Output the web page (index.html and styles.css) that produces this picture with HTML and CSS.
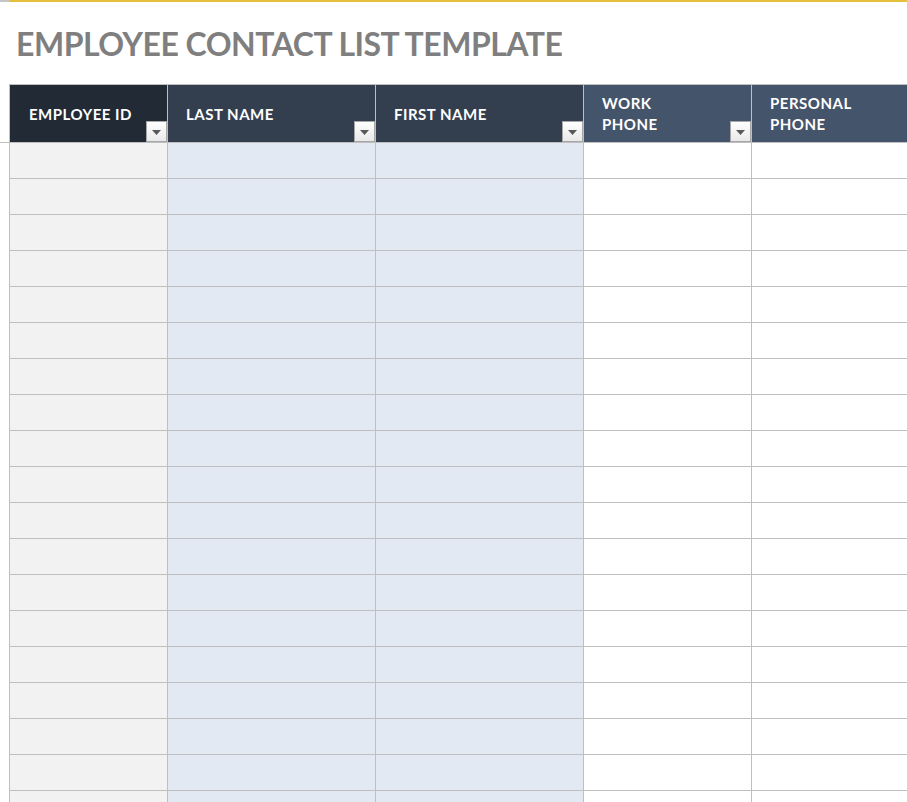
FILE: index.html
```html
<!DOCTYPE html>
<html lang="en">
<head>
<meta charset="utf-8">
<title>Employee Contact List Template</title>
<link rel="stylesheet" href="styles.css">
</head>
<body>
<div class="topbar"><span class="topbar-corner"></span><span class="topbar-line"></span></div>
<h1 class="title">EMPLOYEE CONTACT LIST TEMPLATE</h1>
<div class="sheet-wrap">
  <div class="gutter"><div class="gutter-head"></div></div>
  <div class="sheet">
    <div class="hcell h1"><span class="htext">EMPLOYEE ID</span><span class="filter"><svg width="9" height="5" viewBox="0 0 9 5"><path d="M0 0h9L4.5 5z" fill="#595959"/></svg></span></div>
    <div class="hcell h2"><span class="htext">LAST NAME</span><span class="filter"><svg width="9" height="5" viewBox="0 0 9 5"><path d="M0 0h9L4.5 5z" fill="#595959"/></svg></span></div>
    <div class="hcell h2"><span class="htext">FIRST NAME</span><span class="filter"><svg width="9" height="5" viewBox="0 0 9 5"><path d="M0 0h9L4.5 5z" fill="#595959"/></svg></span></div>
    <div class="hcell h3"><span class="htext">WORK<br>PHONE</span><span class="filter"><svg width="9" height="5" viewBox="0 0 9 5"><path d="M0 0h9L4.5 5z" fill="#595959"/></svg></span></div>
    <div class="hcell h3"><span class="htext">PERSONAL<br>PHONE</span></div>

    <div class="c c1"></div><div class="c c2"></div><div class="c c2"></div><div class="c c3"></div><div class="c c3"></div>
    <div class="c c1"></div><div class="c c2"></div><div class="c c2"></div><div class="c c3"></div><div class="c c3"></div>
    <div class="c c1"></div><div class="c c2"></div><div class="c c2"></div><div class="c c3"></div><div class="c c3"></div>
    <div class="c c1"></div><div class="c c2"></div><div class="c c2"></div><div class="c c3"></div><div class="c c3"></div>
    <div class="c c1"></div><div class="c c2"></div><div class="c c2"></div><div class="c c3"></div><div class="c c3"></div>
    <div class="c c1"></div><div class="c c2"></div><div class="c c2"></div><div class="c c3"></div><div class="c c3"></div>
    <div class="c c1"></div><div class="c c2"></div><div class="c c2"></div><div class="c c3"></div><div class="c c3"></div>
    <div class="c c1"></div><div class="c c2"></div><div class="c c2"></div><div class="c c3"></div><div class="c c3"></div>
    <div class="c c1"></div><div class="c c2"></div><div class="c c2"></div><div class="c c3"></div><div class="c c3"></div>
    <div class="c c1"></div><div class="c c2"></div><div class="c c2"></div><div class="c c3"></div><div class="c c3"></div>
    <div class="c c1"></div><div class="c c2"></div><div class="c c2"></div><div class="c c3"></div><div class="c c3"></div>
    <div class="c c1"></div><div class="c c2"></div><div class="c c2"></div><div class="c c3"></div><div class="c c3"></div>
    <div class="c c1"></div><div class="c c2"></div><div class="c c2"></div><div class="c c3"></div><div class="c c3"></div>
    <div class="c c1"></div><div class="c c2"></div><div class="c c2"></div><div class="c c3"></div><div class="c c3"></div>
    <div class="c c1"></div><div class="c c2"></div><div class="c c2"></div><div class="c c3"></div><div class="c c3"></div>
    <div class="c c1"></div><div class="c c2"></div><div class="c c2"></div><div class="c c3"></div><div class="c c3"></div>
    <div class="c c1"></div><div class="c c2"></div><div class="c c2"></div><div class="c c3"></div><div class="c c3"></div>
    <div class="c c1"></div><div class="c c2"></div><div class="c c2"></div><div class="c c3"></div><div class="c c3"></div>
    <div class="c c1"></div><div class="c c2"></div><div class="c c2"></div><div class="c c3"></div><div class="c c3"></div>
  </div>
</div>
</body>
</html>
```
FILE: styles.css
```css
html, body {
  margin: 0;
  padding: 0;
  background: #ffffff;
  overflow: hidden;
  font-family: Lato, "Liberation Sans", sans-serif;
}
body {
  width: 907px;
  height: 802px;
}
.topbar {
  display: flex;
  height: 2px;
}
.topbar-corner {
  width: 9px;
  background: #c6c6c6;
}
.topbar-line {
  flex: 1;
  background: #e6bf3c;
}
.title {
  margin: 0;
  padding: 22px 0 20px 16px;
  height: 40px;
  line-height: 40px;
  font-size: 32px;
  font-weight: 700;
  letter-spacing: -0.5px;
  color: #7f7f7f;
  white-space: nowrap;
}
.sheet-wrap {
  display: flex;
  align-items: flex-start;
}
.gutter {
  width: 9px;
  flex: none;
}
.gutter-head {
  margin-top: 1px;
  height: 57px;
  border-bottom: 1px solid #bfbfbf;
}
.sheet {
  flex: none;
  display: grid;
  grid-template-columns: 157px 207px 207px 167px 200px;
  grid-template-rows: 57px;
  grid-auto-rows: 35px;
  gap: 1px;
  padding: 1px 0 0 1px;
  background: #bfbfbf;
}
.hcell {
  display: flex;
  color: #ffffff;
  font-size: 15px;
  font-weight: 700;
  letter-spacing: 0.5px;
  line-height: 21px;
  padding-left: 18px;
}
.h1 { background: #222a35; padding-left: 19px; }
.h2 { background: #333f4f; }
.h3 { background: #44546a; }
.htext {
  flex: 1;
  align-self: center;
  white-space: nowrap;
  padding-top: 1px;
}
.filter {
  align-self: flex-end;
  box-sizing: border-box;
  width: 21px;
  height: 21px;
  border: 1px solid #a6a6a6;
  background: linear-gradient(#ffffff, #e9e9e9);
  display: flex;
  align-items: center;
  justify-content: center;
  padding-top: 1px;
}
.filter svg {
  display: block;
}
.c1 { background: #f2f2f2; }
.c2 { background: #e3e9f3; }
.c3 { background: #ffffff; }
```
